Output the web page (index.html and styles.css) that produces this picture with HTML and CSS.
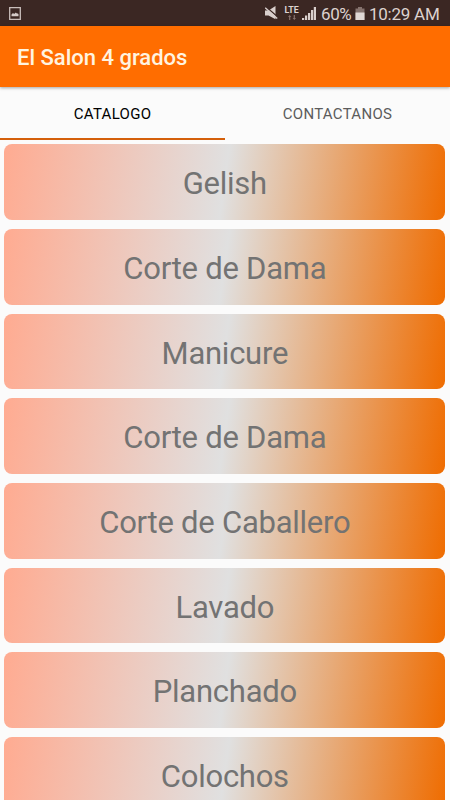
FILE: index.html
```html
<!DOCTYPE html>
<html lang="es">
<head>
<meta charset="utf-8">
<title>El Salon 4 grados</title>
<link rel="stylesheet" href="styles.css">
</head>
<body>
<div class="status-bar">
  <svg class="picture" width="12" height="13" viewBox="0 0 12 13"><path d="M.7.7h10.6v11.6H.7z" fill="none" stroke="#c9bebb" stroke-width="1.3"/><path d="M2.5 9.3V7.5l1.5-1.6 1.1 1.2 1.8-1.6 1.2 1.2.7-.4.7 1v2z" fill="#d5cbc8"/></svg>
  <div class="indicators">
    <svg class="mute" width="13" height="14" viewBox="0 0 13 14"><path d="M0 4.5h3.5L10.5 0v13.3L3.5 9.5H0z" fill="#d9cfcc"/><path d="M1.5 1.2l11 9.6" stroke="#3b2723" stroke-width="1.2"/><path d="M.2 1.8l12 10.6" stroke="#d9cfcc" stroke-width="1.4"/></svg>
    <div class="network"><span class="lte">LTE</span><svg width="8" height="5" viewBox="0 0 8 5"><path d="M0 2l1.7-2 1.7 2H2.3v3H1.1V2zM4.6 3l1.7 2L8 3H6.9V0H5.7v3z" fill="#86716c"/></svg></div>
    <svg class="signal" width="14" height="13" viewBox="0 0 14 13"><path d="M0 11h2.2v2H0zM3 8.5h2.2V13H3zM6 6h2.2v7H6zM9 3h2.2v10H9zM11.8 0H14v13h-2.2z" fill="#d9cfcc"/></svg>
    <span class="percent">60%</span>
    <svg class="battery" width="10" height="13" viewBox="0 0 10 13"><path d="M3 0h4v1.5h2.5V13H.5V1.5H3z" fill="#85736e"/><path d="M.5 5.5h9V13h-9z" fill="#e0d8d5"/></svg>
    <span class="clock">10:29 AM</span>
  </div>
</div>
<header class="app-bar"><h1>El Salon 4 grados</h1></header>
<nav class="tabs">
  <div class="tab active">CATALOGO</div>
  <div class="tab">CONTACTANOS</div>
</nav>
<main class="catalog">
  <div class="card">Gelish</div>
  <div class="card">Corte de Dama</div>
  <div class="card">Manicure</div>
  <div class="card">Corte de Dama</div>
  <div class="card">Corte de Caballero</div>
  <div class="card">Lavado</div>
  <div class="card">Planchado</div>
  <div class="card">Colochos</div>
</main>
</body>
</html>
```
FILE: styles.css
```css
* { box-sizing: border-box; }
body {
  margin: 0;
  height: 800px;
  overflow: hidden;
  display: flex;
  flex-direction: column;
  background: #fbfbfb;
  font-family: Roboto, "Liberation Sans", sans-serif;
}
.status-bar {
  flex: none;
  height: 26px;
  padding: 0 10px 0 9px;
  display: flex;
  align-items: center;
  justify-content: space-between;
  background: #3b2723;
  color: #dcd2cf;
}
.indicators { display: flex; align-items: center; height: 26px; }
.network {
  display: flex;
  flex-direction: column;
  align-items: center;
  width: 15px;
  margin: 0 3px 0 6px;
}
.lte { font-size: 8.8px; line-height: 8px; font-weight: 700; margin-bottom: 1px; }
.signal { margin-right: 5px; }
.percent { font-size: 17px; line-height: 26px; width: 30px; letter-spacing: -0.4px; padding-top: 1px; }
.battery { margin: 0 4px 0 4px; }
.clock { font-size: 17px; line-height: 26px; width: 71px; white-space: nowrap; letter-spacing: -0.25px; padding-top: 1px; }
.app-bar {
  flex: none;
  height: 61px;
  padding: 0 17px;
  display: flex;
  align-items: center;
  background: #ff6d00;
  box-shadow: 0 1px 3px rgba(0, 0, 0, .35);
  z-index: 1;
}
h1 { margin: 2px 0 0; font-size: 22px; line-height: 28px; font-weight: 500; color: #fff4e0; }
.tabs { flex: none; height: 53px; display: flex; }
.tab {
  flex: 1;
  padding-top: 3px;
  display: flex;
  align-items: center;
  justify-content: center;
  font-size: 15px;
  letter-spacing: 0.3px;
  color: #5c5c5c;
  border-bottom: 2px solid transparent;
}
.tab.active { color: #000; border-bottom-color: #d45f0a; }
.catalog { padding: 4.3px 4.6px 0 4.3px; display: flex; flex-direction: column; gap: 9px; }
.card {
  flex: none;
  height: 75.7px;
  border-radius: 8px;
  display: flex;
  align-items: center;
  justify-content: center;
  padding-top: 3px;
  background: linear-gradient(98deg, #ffab91 0%, #e0e0e0 50%, #ef6c00 100%);
  color: #737373;
  font-size: 31px;
  letter-spacing: -0.25px;
}
```
